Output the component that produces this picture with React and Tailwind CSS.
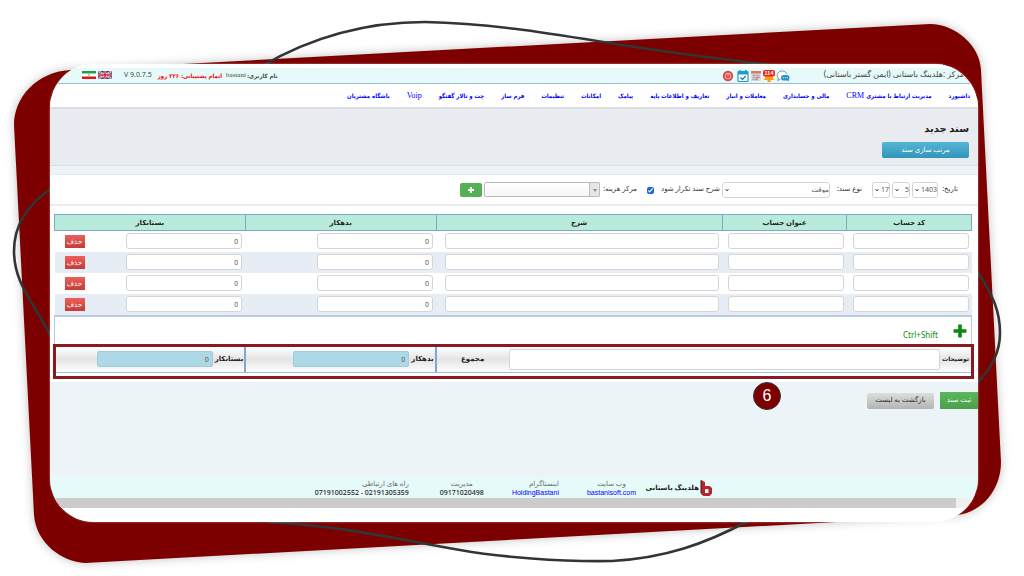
import React from "react";

const nav = [
  { text: "داشبورد" },
  { text: "مدیریت ارتباط با مشتری", latin: "CRM" },
  { text: "مالی و حسابداری" },
  { text: "معاملات و انبار" },
  { text: "تعاریف و اطلاعات پایه" },
  { text: "پیامک" },
  { text: "امکانات" },
  { text: "تنظیمات" },
  { text: "فرم ساز" },
  { text: "چت و تالار گفتگو" },
  { latin: "Voip" },
  { text: "باشگاه مشتریان" },
];

const fieldBox = "h-4 rounded-[3px] border border-[#d5d5d5] bg-white text-[7px] leading-none text-[#555]";

function Backdrop() {
  return (
    <svg
      className="absolute inset-0 h-full w-full"
      viewBox="0 0 1024 576"
      preserveAspectRatio="none"
      aria-hidden="true"
    >
      <path
        className="drop-shadow-[0_0_5px_rgba(0,0,0,0.25)]"
        fill="#7d0000"
        d="M14 125 C14 98 36 72 70 70 L930 24 C955 24 980 45 981 70 L1001 462 C1001 490 982 513 955 515.5 L85 563 C62 562 36 543 34 515 Z"
      />
      <g fill="none" stroke="#333436" strokeWidth="2.6">
        <path d="M262 66 C310 38 365 22 425 22 C520 24 600 44 684 54 L770 65" />
        <path d="M52 188 C28 204 14 225 14 251 C14 284 34 302 52 339" />
        <path d="M977 271 C994 297 1000 312 1000 333 C1000 352 992 368 977 383" />
        <path d="M268 522 C350 527 390 538 460 550 C500 557 560 562 612 561 C665 558 705 544 748 521" />
      </g>
    </svg>
  );
}

function Chevron() {
  return (
    <svg className="pointer-events-none absolute top-1.5 left-[3px] h-1 w-1" viewBox="0 0 8 8" fill="none" stroke="#555" strokeWidth="2">
      <path d="M1 2l3 4 3-4" />
    </svg>
  );
}

function Pick({ id, label, value, width }) {
  return (
    <span className={`relative block ${width}`}>
      <select id={id} aria-label={label} defaultValue={value} className={`${fieldBox} block w-full appearance-none pl-1.5`}>
        <option>{value}</option>
      </select>
      <Chevron />
    </span>
  );
}

function IranFlag() {
  return (
    <svg className="h-2 w-3.5" viewBox="0 0 14 8">
      <path fill="#fff" d="M0 0h14v8H0z" />
      <path fill="#239f40" d="M0 0h14v2.5H0z" />
      <path fill="#da1a1a" d="M0 5.5h14V8H0z" />
      <circle cx="7" cy="4" r="0.8" fill="#da5a5a" />
    </svg>
  );
}

function UkFlag() {
  return (
    <svg className="h-2 w-3.5" viewBox="0 0 14 8">
      <path fill="#28356f" d="M0 0h14v8H0z" />
      <path stroke="#fff" strokeWidth="1.8" d="M0 0l14 8M14 0L0 8" />
      <path stroke="#c8202f" strokeWidth="0.7" d="M0 0l14 8M14 0L0 8" />
      <path stroke="#fff" strokeWidth="2.6" d="M7 0v8M0 4h14" />
      <path stroke="#c8202f" strokeWidth="1.4" d="M7 0v8M0 4h14" />
    </svg>
  );
}

function HeaderIcons() {
  return (
    <div className="flex items-center gap-px">
      <svg className="h-3 w-3.5" viewBox="0 0 14 12">
        <path fill="#fff" stroke="#7f98a5" strokeWidth="1" d="M11 4A5 4.200 0 1 0 2.500 8L1.500 10.500l3-1.300" />
        <rect x="5" y="5" width="8.500" height="5.500" rx="2.700" fill="#2a8fc4" />
        <path fill="#2a8fc4" d="M10 9l3 2.600-.2-3.400z" />
        <path stroke="#fff" strokeWidth="1" strokeDasharray="1 1" d="M6.800 7.700h5" />
      </svg>
      <svg className="h-3 w-3" viewBox="0 0 12 12">
        <path fill="#ff9c12" d="M2 5h8v3.500l1.800 1.500H.2L2 8.500zM4.500 10h3v2h-3z" />
        <rect width="12" height="6.500" rx="2" fill="#f02020" />
        <text x="6" y="5.200" fill="#fff" fontSize="5.500" fontWeight="700" fontFamily="Liberation Sans, sans-serif" textAnchor="middle">114</text>
      </svg>
      <svg className="h-3 w-3" viewBox="0 0 12 12">
        <path fill="#dcdcdc" d="M1 1h10v10H1z" />
        <path fill="#e2746a" d="M1 1h10v2.500H1z" />
        <path stroke="#aaa" strokeWidth="0.800" d="M2 5.500h8M2 7.500h8M2 9.500h6M4 4v7M7 4v7" />
        <path stroke="#e2574c" strokeWidth="1" d="M6 9.500l3-3" />
      </svg>
      <svg className="h-3 w-3" viewBox="0 0 12 12">
        <rect x="1" y="1.500" width="10" height="10" rx="1" fill="#fff" stroke="#1e9bd0" strokeWidth="1.200" />
        <path fill="#1e9bd0" d="M1 1.500h10v3H1zM2.500 0h1.500v2H2.500zM8 0h1.500v2H8z" />
        <path fill="none" stroke="#16709b" strokeWidth="1.200" d="M3.500 7.500l2 1.800 3.200-3.300" />
      </svg>
      <svg className="mr-0.5 h-3 w-3" viewBox="0 0 12 12" fill="none">
        <circle cx="6" cy="6" r="5.200" fill="#d64a4a" />
        <circle cx="6" cy="6" r="2.900" stroke="#f4c6c6" strokeWidth="0.900" />
        <path stroke="#f4c6c6" strokeWidth="1" d="M6 3.500v3" />
      </svg>
    </div>
  );
}

function FooterItem({ title, children, align = "text-right" }) {
  return (
    <div className={`${align} whitespace-nowrap`}>
      <div className="text-[7px] leading-[9px] text-[#666]">{title}</div>
      <div className="text-[7px] leading-[9px] font-medium text-[#222]" dir="ltr">{children}</div>
    </div>
  );
}

function TotalCell({ id, label }) {
  return (
    <div className="flex w-[20.8%] items-center gap-0.5 border-r-2 border-[#7fa8cc] pr-px">
      <label htmlFor={id} className="text-[7px] font-bold whitespace-nowrap text-[#222]">{label}</label>
      <input id={id} readOnly defaultValue="0" className="h-4 w-[116px] rounded-xs border border-[#a3cbdc] bg-[#add8e6] px-[3px] text-right text-[7px] text-[#555]" />
    </div>
  );
}

export default function App() {
  return (
    <div
      dir="rtl"
      className="relative flex min-h-screen flex-col bg-white pt-16 pr-[46px] pb-[54px] pl-[50px] font-['Noto_Sans','DejaVu_Sans',sans-serif]"
    >
      <Backdrop />
      <main className="relative flex flex-1 flex-col overflow-hidden rounded-[44px] bg-[#ecf4f8] shadow-[0_0_2px_rgba(255,255,255,0.6)]">
        <header className="flex h-5 items-center border-t-4 border-b border-t-white border-b-[#9dbdd0] bg-[#e6fbf9] pr-2 pl-8 text-[7px] whitespace-nowrap text-[#444]">
          <div className="w-[149px] pb-1 text-[8px]">ر مرکز :هلدینگ باستانی (ایمن گستر باستانی)</div>
          <div className="mr-[31px]"><HeaderIcons /></div>
          <div className="flex-1" />
          <div className="flex items-center gap-1 pb-px">
            <span className="flex items-center gap-px font-['DejaVu_Sans_Condensed','DejaVu_Sans',sans-serif] text-[6px] font-bold">
              <span>نام کاربری:</span>
              <span className="font-['Liberation_Serif',serif] text-[7px] font-normal">bastani</span>
            </span>
            <span className="font-['DejaVu_Sans_Condensed','DejaVu_Sans',sans-serif] text-[6px] font-bold text-[#f00]">اتمام پشتیبانی: ۲۲۶ روز</span>
            <span className="mr-0.5 text-[7px]" dir="ltr">V 9.0.7.5</span>
            <span className="mr-2 flex gap-0.5">
              <UkFlag />
              <IranFlag />
            </span>
          </div>
        </header>

        <nav className="flex h-[25px] items-center gap-[17px] border-b-2 border-[#dcdfe2] bg-white pr-2 font-['DejaVu_Sans_Condensed','DejaVu_Sans',sans-serif] text-[6px] leading-[10px] whitespace-nowrap">
          {nav.map(({ text, latin }) => (
            <a key={text || latin} href="#" className="flex items-center gap-0.5 text-[#00f]">
              {text && <span className="font-bold">{text}</span>}
              {latin && <span className="font-['Liberation_Serif',serif] text-[8px]">{latin}</span>}
            </a>
          ))}
        </nav>

        <section className="flex h-[57px] flex-col items-start border-b border-[#d9dde1] bg-[#e8ecf1] pt-3 pr-[9px]">
          <h1 className="text-[10px] leading-[14px] font-bold text-[#222]">سند جدید</h1>
          <button className="mt-[7px] h-4 w-[87px] rounded-xs bg-linear-to-b from-[#56b5d6] to-[#2f96b8] text-[7px] text-white">
            مرتب سازی سند
          </button>
        </section>

        <section className="mt-2 bg-white pb-[3px]">
          <form className="flex h-8 items-center border-t border-b-2 border-[#e9ebed] pr-5 text-[7px] whitespace-nowrap text-[#333]">
            <label htmlFor="year" className="w-5">تاریخ:</label>
            <div className="flex gap-0.5">
              <Pick id="year" label="سال" value="1403" width="w-[26px]" />
              <Pick id="month" label="ماه" value="5" width="w-[18px]" />
              <Pick id="day" label="روز" value="17" width="w-[18px]" />
            </div>
            <label htmlFor="kind" className="mr-2.5 w-8">نوع سند:</label>
            <Pick id="kind" label="نوع سند" value="موقت" width="w-[108px]" />
            <label htmlFor="repeat" className="mr-0.5 w-[64px]">شرح سند تکرار شود</label>
            <input id="repeat" type="checkbox" defaultChecked className="mt-0.5 mr-0.5 h-[7px] w-[7px] accent-[#1a66d8]" />
            <label htmlFor="center" className="mr-2.5 w-[37px]">مرکز هزینه:</label>
            <span className="relative block w-[116px]">
              <select id="center" className="block h-[15px] w-full appearance-none rounded-xs border border-[#bbb] bg-linear-to-b from-white to-[#f6f6f6]">
                <option></option>
              </select>
              <span className="pointer-events-none absolute inset-y-0 right-0 flex w-[11px] items-center justify-center rounded-r-xs border border-[#bbb] bg-[#e6e6e6]">
                <svg className="h-1 w-1" viewBox="0 0 4 4"><path fill="#888" d="M0 1h4L2 4z" /></svg>
              </span>
            </span>
            <button type="button" aria-label="افزودن مرکز هزینه" className="mr-0.5 flex h-3.5 w-[22px] items-center justify-center rounded-xs bg-[#55af55]">
              <svg className="h-1.5 w-1.5" viewBox="0 0 6 6"><path stroke="#fff" strokeWidth="2" d="M3 0v6M0 3h6" /></svg>
            </button>
          </form>

          <div className="mt-2 pr-1.5 pl-1">
            <table className="w-full table-fixed border-collapse text-[7px]">
              <colgroup>
                <col className="w-[13.6%]" />
                <col className="w-[13.6%]" />
                <col className="w-[31.2%]" />
                <col className="w-[20.8%]" />
                <col className="w-[20.8%]" />
              </colgroup>
              <thead>
                <tr className="h-4 bg-[#b9ebdd] text-[#222]">
                  {["کد حساب", "عنوان حساب", "شرح", "بدهکار", "بستانکار"].map((h) => (
                    <th key={h} className="border border-[#7ea9c4] p-0 leading-[15px] font-bold">{h}</th>
                  ))}
                </tr>
              </thead>
              <tbody>
                {[1, 2, 3, 4].map((n) => (
                  <tr key={n} className="h-[21px] even:bg-[#e6edf5]">
                    <td className="p-0 pr-[3px] pl-1.5"><input aria-label={`کد حساب ${n}`} className={`${fieldBox} block w-full`} /></td>
                    <td className="p-0 pr-[3px] pl-1.5"><input aria-label={`عنوان حساب ${n}`} className={`${fieldBox} block w-full`} /></td>
                    <td className="p-0 pr-[3px] pl-[9px]"><input aria-label={`شرح ${n}`} className={`${fieldBox} block w-full`} /></td>
                    <td className="p-0 pr-[3px]"><input aria-label={`بدهکار ${n}`} defaultValue="0" className={`${fieldBox} block w-[116px] px-[3px]`} /></td>
                    <td className="p-0 pr-[3px]">
                      <div className="flex items-center justify-between pl-2.5">
                        <input aria-label={`بستانکار ${n}`} defaultValue="0" className={`${fieldBox} w-[116px] px-[3px]`} />
                        <button className="h-[13px] w-5 bg-linear-to-b from-[#ee5f5b] to-[#c43c35] text-[7px] leading-none text-white">حذف</button>
                      </div>
                    </td>
                  </tr>
                ))}
              </tbody>
            </table>
            <div className="flex h-[29px] items-center border border-t-2 border-b-0 border-[#b9cde0] pt-0.5 pr-1">
              <button aria-label="افزودن ردیف" className="h-3.5 w-3.5">
                <svg viewBox="0 0 14 14"><path stroke="#0a8a0a" strokeWidth="3.600" d="M7 0.500v13M0.500 7h13" /></svg>
              </button>
              <span className="mt-2 mr-[15px] text-[8px] leading-[10px] text-[#0a8a0a]" dir="ltr">Ctrl+Shift</span>
            </div>
            <div className="-mr-0.5 -ml-px border-[3px] border-[#8b1a20] pb-[3px]">
              <div className="flex h-[26px] border-b border-[#9dbdd8] bg-linear-to-b from-white via-[#e4e4e4] to-white">
                <div className="flex flex-1 items-center pr-0.5">
                  <label htmlFor="notes" className="w-[29px] text-[6px] font-bold whitespace-nowrap text-[#222]">توضیحات</label>
                  <textarea id="notes" rows="1" className="h-[21px] flex-1 resize-none rounded-xs border border-[#d5d5d5] bg-white text-[7px]" />
                  <span className="w-[72px] text-center text-[7px] font-bold text-[#222]">مجموع</span>
                </div>
                <TotalCell id="debit" label="بدهکار" />
                <TotalCell id="credit" label="بستانکار" />
              </div>
            </div>
          </div>
        </section>

        <div className="flex items-center">
          <button className="mt-2.5 h-[17px] w-[38px] bg-linear-to-b from-[#5bb75b] to-[#4c9f4c] text-[7px] text-white">ثبت سند</button>
          <button className="mt-2.5 mr-1.5 h-4 w-[67px] rounded-xs bg-linear-to-b from-[#dedede] to-[#b4b4b4] text-[7px] text-[#333]">بازگشت به لیست</button>
          <span className="mr-[86px] flex h-7 w-7 items-center justify-center rounded-full border border-[#333] bg-[#7d0000] font-['Liberation_Sans',sans-serif] text-base leading-none text-white">6</span>
        </div>

        <footer className="mt-auto flex h-[22px] items-center bg-[#e6fbf9] pt-0.5 pr-[266px]">
          <svg className="h-4 w-3" viewBox="0 0 12 16">
            <path fill="#55151a" d="M0.500 0L3 1v13.500L1.500 14 0.500 13z" />
            <path fill="#b5252d" fillRule="evenodd" d="M1.500 0.500L5 2v4h4.500L12 8v5.500L9.500 16H3.500L1.500 14.500zM5 9v4h3.500V9z" />
          </svg>
          <span className="mr-px w-[63px] text-[7px] font-bold whitespace-nowrap text-[#222]">هلدینگ باستانی</span>
          <FooterItem title="وب سایت" align="text-center"><a href="#" className="font-['Liberation_Sans',sans-serif] text-[#00f]">bastanisoft.com</a></FooterItem>
          <div className="w-7" />
          <FooterItem title="اینستاگرام"><a href="#" className="font-['Liberation_Sans',sans-serif] text-[#00f]">HoldingBastani</a></FooterItem>
          <div className="w-7" />
          <FooterItem title="مدیریت" align="text-center">09171020498</FooterItem>
          <div className="w-[31px]" />
          <FooterItem title="راه های ارتباطی">07191002552 - 02191305359</FooterItem>
        </footer>
        <div className="h-6 bg-white">
          <div className="h-2.5 bg-[#f0f0f0] pr-[22px]"><div className="h-full bg-[#ccc]" /></div>
        </div>
      </main>
    </div>
  );
}
